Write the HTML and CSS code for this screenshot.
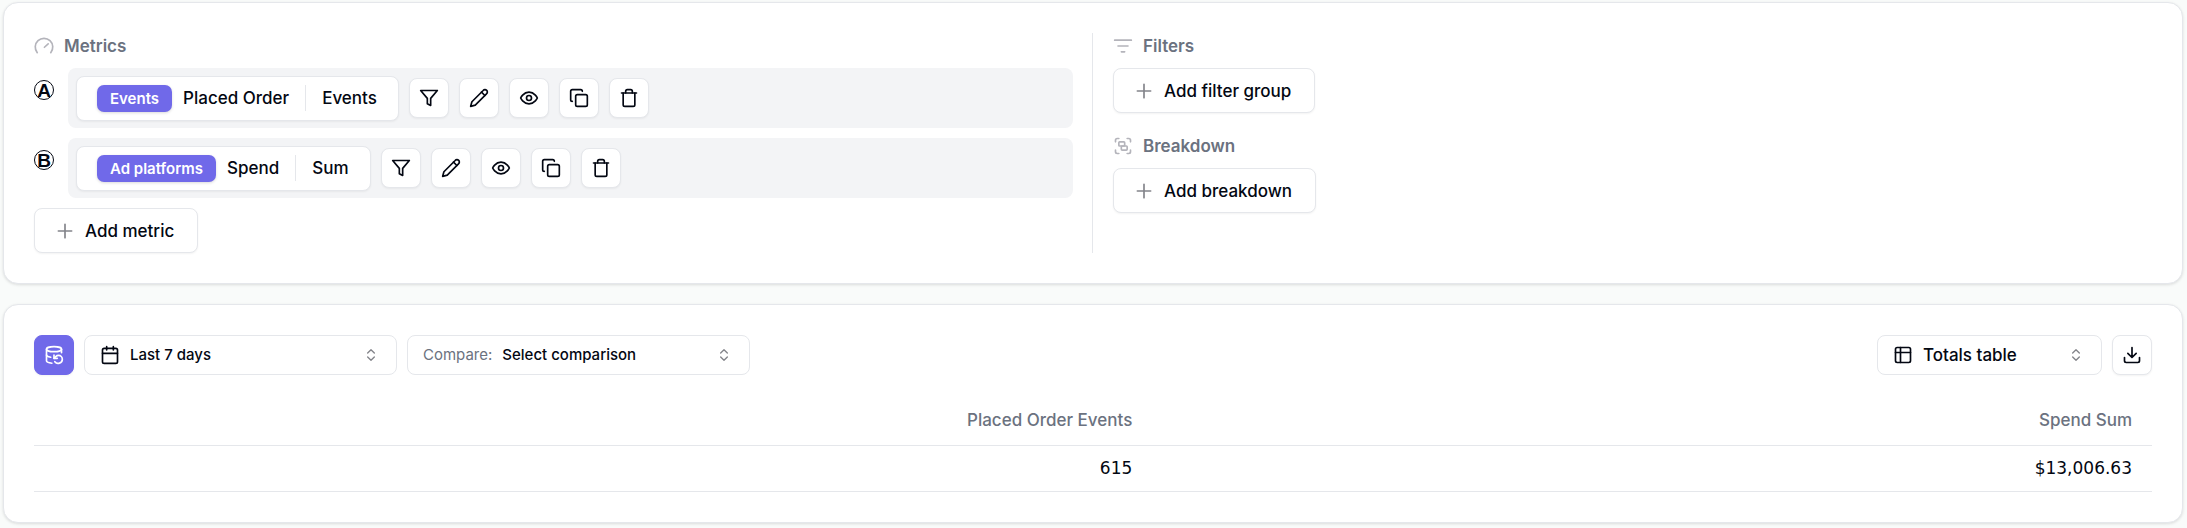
FILE: index.html
```html
<!DOCTYPE html>
<html lang="en">

<head>
    <meta charset="utf-8">
    <title>Metrics</title>
    <link rel="stylesheet" href="styles.css">
</head>

<body>
    <!-- shared icons -->
    <svg class="sprite" aria-hidden="true">
        <symbol id="i-gauge" viewBox="0 0 24 24"><path d="m12.500 13.500 4.500-4"/><path d="M3.900 20a10.500 10.500 0 1 1 16.200 0"/></symbol>
        <symbol id="i-filter" viewBox="0 0 24 24"><path d="M22 3H2l8 9.460V19l4 2v-8.540L22 3z"/></symbol>
        <symbol id="i-pencil" viewBox="0 0 24 24"><path d="M17 3a2.850 2.830 0 1 1 4 4L7.500 20.500 2 22l1.500-5.500Z"/><path d="m15 5 4 4"/></symbol>
        <symbol id="i-eye" viewBox="0 0 24 24"><path d="M2 12s3-7 10-7 10 7 10 7-3 7-10 7-10-7-10-7Z"/><circle cx="12" cy="12" r="3"/></symbol>
        <symbol id="i-copy" viewBox="0 0 24 24"><rect x="8" y="8" width="14" height="14" rx="2"/><path d="M4 16c-1.100 0-2-.9-2-2V4c0-1.100.9-2 2-2h10c1.100 0 2 .9 2 2"/></symbol>
        <symbol id="i-trash" viewBox="0 0 24 24"><path d="M3 6h18"/><path d="M19 6v14c0 1-1 2-2 2H7c-1 0-2-1-2-2V6"/><path d="M8 6V4c0-1 1-2 2-2h4c1 0 2 1 2 2v2"/></symbol>
        <symbol id="i-plus" viewBox="0 0 24 24"><path d="M4 12h16M12 4v16"/></symbol>
        <symbol id="i-lines" viewBox="0 0 24 24"><path d="M2 5h20M6 12h12M10 19h4"/></symbol>
        <symbol id="i-group" viewBox="0 0 24 24"><path d="M3 7V5c0-1.100.9-2 2-2h2M17 3h2c1.100 0 2 .9 2 2v2M21 17v2c0 1.100-.9 2-2 2h-2M7 21H5c-1.100 0-2-.9-2-2v-2"/><rect x="7" y="7" width="7" height="5" rx="1"/><rect x="10" y="12" width="7" height="5" rx="1"/></symbol>
        <symbol id="i-database" viewBox="0 0 24 24"><ellipse cx="12" cy="5" rx="9" ry="3"/><path d="M3 12a9 3 0 0 0 5 2.690"/><path d="M21 9.300V5"/><path d="M3 5v14a9 3 0 0 0 6.470 2.880"/><path d="M12 12v4h4"/><path d="M13 20a5 5 0 0 0 9-3 4.500 4.500 0 0 0-4.500-4.500c-1.330 0-2.540.54-3.410 1.410L12 16"/></symbol>
        <symbol id="i-calendar" viewBox="0 0 24 24"><rect x="3" y="4" width="18" height="18" rx="2"/><path d="M16 2v4M8 2v4M3 10h18"/></symbol>
        <symbol id="i-updown" viewBox="0 0 24 24"><path d="m7 15 5 5 5-5M7 9l5-5 5 5"/></symbol>
        <symbol id="i-table" viewBox="0 0 24 24"><rect x="3" y="3" width="18" height="18" rx="2"/><path d="M3 9h18M9 3v18"/></symbol>
        <symbol id="i-download" viewBox="0 0 24 24"><path d="M21 15v4a2 2 0 0 1-2 2H5a2 2 0 0 1-2-2v-4"/><path d="m7 10 5 5 5-5M12 15V3"/></symbol>
    </svg>

    <section class="card builder">
        <div class="column metrics">
            <h2><svg class="icon"><use href="#i-gauge"/></svg>Metrics</h2>
            <div class="metric">
                <span class="letter">A</span>
                <div class="metric-bar">
                    <button class="chip"><span class="badge">Events</span><span>Placed Order</span><span class="agg">Events</span></button>
                    <button class="square" aria-label="Filter"><svg class="icon"><use href="#i-filter"/></svg></button>
                    <button class="square" aria-label="Rename"><svg class="icon"><use href="#i-pencil"/></svg></button>
                    <button class="square" aria-label="Hide"><svg class="icon"><use href="#i-eye"/></svg></button>
                    <button class="square" aria-label="Duplicate"><svg class="icon"><use href="#i-copy"/></svg></button>
                    <button class="square" aria-label="Delete"><svg class="icon"><use href="#i-trash"/></svg></button>
                </div>
            </div>
            <div class="metric">
                <span class="letter">B</span>
                <div class="metric-bar">
                    <button class="chip"><span class="badge">Ad platforms</span><span>Spend</span><span class="agg">Sum</span></button>
                    <button class="square" aria-label="Filter"><svg class="icon"><use href="#i-filter"/></svg></button>
                    <button class="square" aria-label="Rename"><svg class="icon"><use href="#i-pencil"/></svg></button>
                    <button class="square" aria-label="Hide"><svg class="icon"><use href="#i-eye"/></svg></button>
                    <button class="square" aria-label="Duplicate"><svg class="icon"><use href="#i-copy"/></svg></button>
                    <button class="square" aria-label="Delete"><svg class="icon"><use href="#i-trash"/></svg></button>
                </div>
            </div>
            <button class="add"><svg class="icon"><use href="#i-plus"/></svg>Add metric</button>
        </div>
        <div class="column options">
            <div class="group">
                <h2><svg class="icon"><use href="#i-lines"/></svg>Filters</h2>
                <button class="add"><svg class="icon"><use href="#i-plus"/></svg>Add filter group</button>
            </div>
            <div class="group">
                <h2><svg class="icon"><use href="#i-group"/></svg>Breakdown</h2>
                <button class="add"><svg class="icon"><use href="#i-plus"/></svg>Add breakdown</button>
            </div>
        </div>
    </section>

    <section class="card">
        <div class="toolbar">
            <button class="square primary" aria-label="Refresh data"><svg class="icon"><use href="#i-database"/></svg></button>
            <div class="picker date">
                <svg class="icon"><use href="#i-calendar"/></svg>
                <select aria-label="Date range">
                    <option>Last 7 days</option>
                </select>
                <svg class="icon arrows"><use href="#i-updown"/></svg>
            </div>
            <div class="picker compare">
                <label for="compare">Compare:</label>
                <select id="compare">
                    <option>Select comparison</option>
                </select>
                <svg class="icon arrows"><use href="#i-updown"/></svg>
            </div>
            <div class="picker view">
                <svg class="icon"><use href="#i-table"/></svg>
                <select aria-label="View">
                    <option>Totals table</option>
                </select>
                <svg class="icon arrows"><use href="#i-updown"/></svg>
            </div>
            <button class="square" aria-label="Download"><svg class="icon"><use href="#i-download"/></svg></button>
        </div>
        <table>
            <thead>
                <tr>
                    <th>Placed Order Events</th>
                    <th>Spend Sum</th>
                </tr>
            </thead>
            <tbody>
                <tr>
                    <td>615</td>
                    <td>$13,006.63</td>
                </tr>
            </tbody>
        </table>
    </section>
</body>

</html>
```
FILE: styles.css
```css
* {
    box-sizing: border-box;
}

body {
    margin: 0;
    padding: 2px 4px 6px 3px;
    display: flex;
    flex-direction: column;
    gap: 20px;
    background: #f9fbfa;
    color: #030712;
    font-family: Inter, "Liberation Sans", sans-serif;
    font-size: 17px;
    line-height: 26px;
}

button,
select {
    font: inherit;
    color: inherit;
}

.sprite {
    position: absolute;
    width: 0;
    height: 0;
}

.icon {
    flex: none;
    width: 20px;
    height: 20px;
    fill: none;
    stroke: currentColor;
    stroke-width: 2;
    stroke-linecap: round;
    stroke-linejoin: round;
}

.card {
    padding: 30px;
    background: #fff;
    border: 1px solid #e5e7eb;
    border-radius: 15px;
    box-shadow: 0 1px 3px rgba(0, 0, 0, 0.12);
}

.builder {
    display: grid;
    grid-template-columns: 1fr 1fr;
}

.column {
    display: flex;
    flex-direction: column;
    align-items: flex-start;
    gap: 10px;
}

.metrics {
    padding-right: 19px;
    border-right: 1px solid #e5e7eb;
}

.options {
    gap: 20px;
    padding-left: 20px;
}

h2 {
    display: flex;
    align-items: center;
    gap: 10px;
    height: 25px;
    margin: 0;
    color: #6b7280;
    font-size: 17px;
    font-weight: 600;
}

h2 .icon {
    color: #b4b4bb;
}

.group {
    display: flex;
    flex-direction: column;
    align-items: flex-start;
    gap: 10px;
}

.metric {
    display: flex;
    align-items: flex-start;
    gap: 14px;
    width: 100%;
}

.letter {
    width: 20px;
    height: 20px;
    margin-top: 12px;
    border: 1px solid #030712;
    border-radius: 50%;
    font-family: "Liberation Sans", sans-serif;
    font-size: 19px;
    font-weight: 700;
    line-height: 19px;
    text-align: center;
}

.metric-bar {
    flex: 1;
    display: flex;
    align-items: center;
    gap: 10px;
    height: 60px;
    padding: 0 8px;
    background: #f3f4f6;
    border-radius: 8px;
}

.chip,
.square,
.add,
.picker {
    display: flex;
    align-items: center;
    background: #fff;
    border: 1px solid #e5e7eb;
    border-radius: 8px;
    font-weight: 500;
}

.chip,
.square,
.add {
    box-shadow: 0 1px 2px rgba(0, 0, 0, 0.05);
}

.chip {
    gap: 11px;
    height: 45px;
    padding: 0 21px 0 20px;
}

.badge {
    padding: 0 13px;
    background: #7069e9;
    border-radius: 7px;
    box-shadow: 0 1px 3px rgba(0, 0, 0, 0.15);
    color: #fff;
    font-size: 15px;
    font-weight: 600;
    line-height: 27px;
}

.agg {
    margin-left: 5px;
    padding-left: 16px;
    border-left: 1px solid #e5e7eb;
}

.square {
    justify-content: center;
    width: 40px;
    height: 40px;
    padding: 0;
}

.primary {
    background: #7069e9;
    border-color: #7069e9;
    color: #fff;
}

.add {
    gap: 10px;
    height: 45px;
    padding: 0 23px 0 20px;
}

.add .icon {
    color: #83848a;
}

.toolbar {
    display: flex;
    gap: 10px;
    margin-bottom: 20px;
}

.picker {
    gap: 10px;
    height: 40px;
    padding: 0 15px;
    font-size: 15px;
}

.picker select {
    flex: 1;
    min-width: 0;
    padding: 0;
    appearance: none;
    background: none;
    border: 0;
}

.picker label {
    color: #6b7280;
    font-weight: 400;
}

.picker .arrows {
    width: 16px;
    height: 16px;
    margin-right: 2px;
    color: #83848a;
}

.date {
    width: 313px;
}

.compare {
    width: 343px;
}

.view {
    width: 225px;
    margin-left: auto;
    font-size: 17px;
}

table {
    width: 100%;
    border-collapse: collapse;
    text-align: right;
}

th,
td {
    padding: 0 20px;
    border-bottom: 1px solid #e5e7eb;
}

th {
    height: 50px;
    color: #6b7280;
    font-weight: 500;
}

th:first-child {
    width: 52.8%;
}

td {
    height: 46px;
    font-family: "DejaVu Sans", sans-serif;
}
```
